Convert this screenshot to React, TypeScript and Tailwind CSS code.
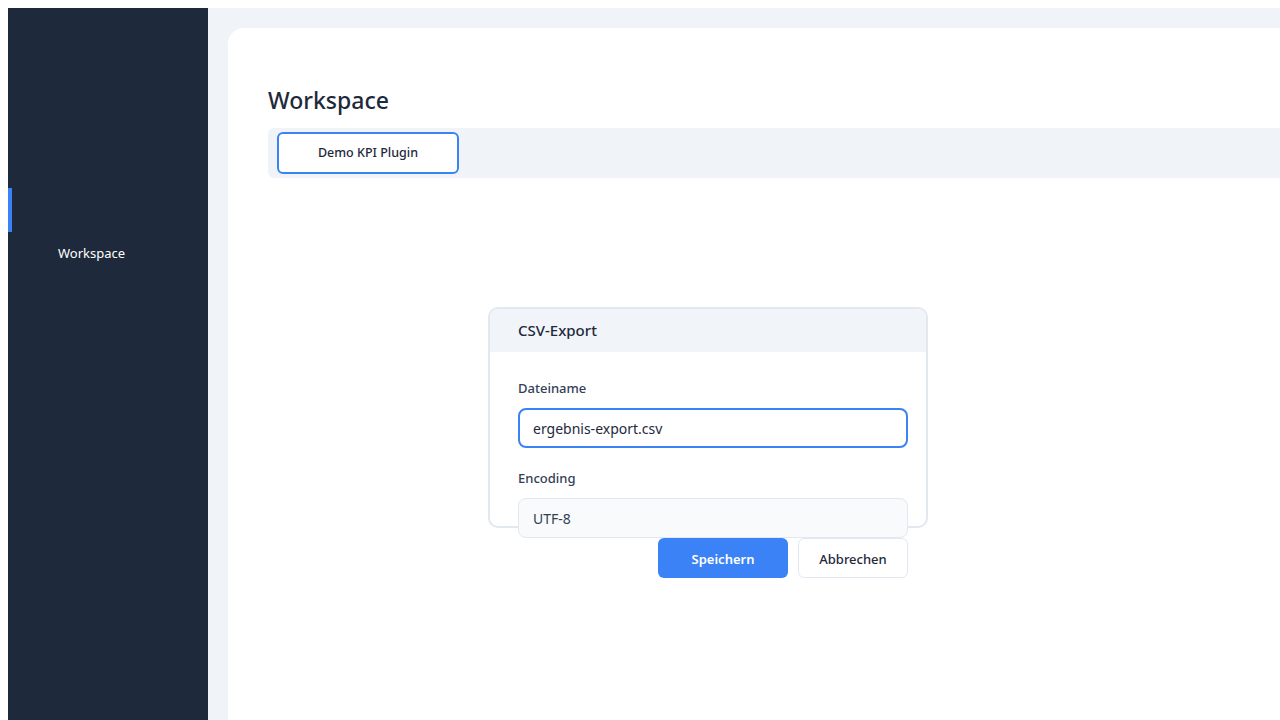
import React from "react";

const font = { fontFamily: '"Noto Sans", "Open Sans", sans-serif' };

function Sidebar() {
  return (
    <aside className="w-[200px] shrink-0 bg-[#1e293b] flex flex-col pt-[180px]">
      <div className="h-[44px] w-1 bg-[#3b82f6]" />
      <div className="pl-[50px] pt-[12px] text-[13px] leading-[18px] text-white">Workspace</div>
    </aside>
  );
}

function ExportDialog() {
  return (
    <div className="ml-[220px] mt-[129px] w-[440px] h-[221px] rounded-[10px] border-2 border-[#e2e8f0] bg-white flex flex-col">
      <div className="h-[43px] shrink-0 rounded-t-[8px] bg-[#f1f5f9] px-7 flex items-center text-[15px] font-medium text-[#1e293b]">
        CSV-Export
      </div>
      <div className="pl-7 pr-[18px] pt-[27px] flex flex-col">
        <label className="text-[13px] leading-[18px] font-medium text-[#334155]">Dateiname</label>
        <input
          readOnly
          value="ergebnis-export.csv"
          className="mt-[11px] h-10 w-full rounded-lg border-2 border-[#3b82f6] bg-white px-[13px] text-[14px] text-[#1e293b] outline-none"
        />
        <label className="mt-[21px] text-[13px] leading-[18px] font-medium text-[#334155]">Encoding</label>
        <div className="mt-[11px] h-10 w-full rounded-lg border border-[#e2e8f0] bg-[#f8fafc] px-[14px] flex items-center text-[14px] text-[#334155]">
          UTF-8
        </div>
        <div className="flex justify-end gap-[10px]">
          <button className="h-10 w-[130px] rounded-md bg-[#3b82f6] pt-[3px] text-[13px] font-semibold text-white">Speichern</button>
          <button className="h-10 w-[110px] rounded-md border border-[#e2e8f0] bg-white pt-[3px] text-[13px] font-medium text-[#1e293b]">
            Abbrechen
          </button>
        </div>
      </div>
    </div>
  );
}

export default function App() {
  return (
    <div className="h-[720px] w-[1280px] overflow-hidden bg-white pl-2 pt-2" style={font}>
      <div className="flex h-[712px] w-[1272px]">
        <Sidebar />
        <main className="flex-1 min-w-0 bg-[#f0f3f7] pl-5 pt-5 overflow-hidden">
          <div className="h-full w-[1100px] rounded-tl-2xl bg-white pl-10 pt-[56px] flex flex-col">
            <h1 className="text-[23px] leading-8 font-medium text-[#1e293b]">Workspace</h1>
            <div className="mt-3 h-[50px] w-[1060px] rounded-l-md bg-[#f0f3f7] pl-[9px] flex items-center">
              <button className="h-[42px] w-[182px] rounded-md border-2 border-[#3b82f6] bg-white text-[12.5px] font-medium text-[#1e293b]">
                Demo KPI Plugin
              </button>
            </div>
            <ExportDialog />
          </div>
        </main>
      </div>
    </div>
  );
}
